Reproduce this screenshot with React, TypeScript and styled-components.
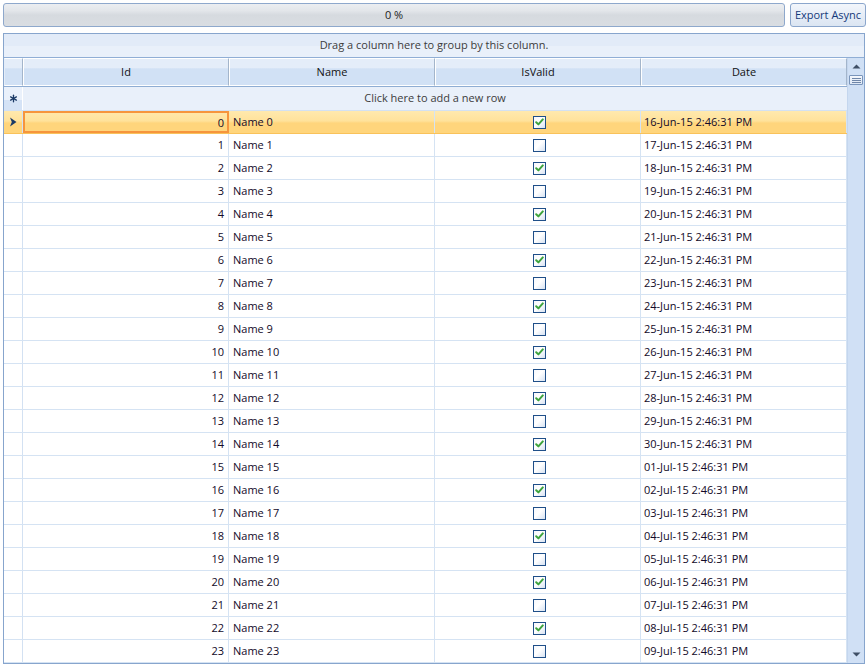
import React from 'react';
import styled, { createGlobalStyle, css } from 'styled-components';

const GlobalStyle = createGlobalStyle`
  html, body {
    margin: 0;
    padding: 0;
    background: #ffffff;
  }
  body {
    font-family: 'Open Sans', 'Noto Sans', sans-serif;
    font-size: 11px;
    color: #000000;
  }
`;

const MONTHS = ['Jan', 'Feb', 'Mar', 'Apr', 'May', 'Jun', 'Jul', 'Aug', 'Sep', 'Oct', 'Nov', 'Dec'];

interface RowData {
  id: number;
  name: string;
  isValid: boolean;
  date: string;
}

const formatDate = (d: Date) => {
  const day = String(d.getDate()).padStart(2, '0');
  const year = String(d.getFullYear()).slice(2);
  return `${day}-${MONTHS[d.getMonth()]}-${year} 2:46:31 PM`;
};

const rows: RowData[] = Array.from({ length: 24 }, (_, i) => {
  const d = new Date(2015, 5, 16 + i);
  return { id: i, name: `Name ${i}`, isValid: i % 2 === 0, date: formatDate(d) };
});

const COLUMNS = '19px 206px 206px 206px 206px';

const App: React.FC = () => {
  return (
    <>
      <GlobalStyle />
      <Page>
        <TopBar>
          <ProgressBar>0 %</ProgressBar>
          <ExportButton>Export Async</ExportButton>
        </TopBar>

        <Grid>
          <GroupPanel>Drag a column here to group by this column.</GroupPanel>
          <GridBody>
            <TableArea>
              <HeaderRow>
                <HeaderCell $indicator />
                <HeaderCell>Id</HeaderCell>
                <HeaderCell>Name</HeaderCell>
                <HeaderCell>IsValid</HeaderCell>
                <HeaderCell>Date</HeaderCell>
              </HeaderRow>

              <NewRow>
                <NewRowIndicator>
                  <svg width="9" height="9" viewBox="0 0 9 9">
                    <g stroke="#1b3a66" strokeWidth="1.3" strokeLinecap="round">
                      <line x1="4.5" y1="1.2" x2="4.5" y2="7.8" />
                      <line x1="1.6" y1="2.9" x2="7.4" y2="6.1" />
                      <line x1="1.6" y1="6.1" x2="7.4" y2="2.9" />
                    </g>
                  </svg>
                </NewRowIndicator>
                <NewRowText>Click here to add a new row</NewRowText>
              </NewRow>

              {rows.map((row) => {
                const selected = row.id === 0;
                return (
                  <DataRow key={row.id} $selected={selected}>
                    <IndicatorCell $selected={selected}>
                      {selected && (
                        <svg width="8" height="10" viewBox="0 0 8 10">
                          <path d="M1 0.5 L7.5 5 L1 9.5 L2.8 5 Z" fill="#1b3a66" />
                        </svg>
                      )}
                    </IndicatorCell>
                    <Cell $align="right" $current={selected}>
                      {row.id}
                    </Cell>
                    <Cell>{row.name}</Cell>
                    <Cell $align="center" $plain>
                      <CheckBox>
                        {row.isValid && (
                          <svg width="9" height="8" viewBox="0 0 9 8">
                            <path
                              d="M1.2 4.2 L3.4 6.4 L7.8 1.4"
                              fill="none"
                              stroke="#3da33d"
                              strokeWidth="2"
                              strokeLinecap="round"
                              strokeLinejoin="round"
                            />
                          </svg>
                        )}
                      </CheckBox>
                    </Cell>
                    <Cell $pad={3}>{row.date}</Cell>
                  </DataRow>
                );
              })}
            </TableArea>

            <ScrollBar>
              <ScrollArrow>
                <svg width="9" height="5" viewBox="0 0 9 5">
                  <path d="M0.5 4.5 L4.5 0.5 L8.5 4.5 Z" fill="#3f4f66" />
                </svg>
              </ScrollArrow>
              <Thumb>
                <ThumbLine />
                <ThumbLine />
                <ThumbLine />
              </Thumb>
              <ScrollTrack />
              <ScrollArrow>
                <svg width="9" height="5" viewBox="0 0 9 5">
                  <path d="M0.5 0.5 L8.5 0.5 L4.5 4.5 Z" fill="#3f4f66" />
                </svg>
              </ScrollArrow>
            </ScrollBar>
          </GridBody>
        </Grid>
      </Page>
    </>
  );
};

export default App;

// Styled Components
const Page = styled.div`
  width: 868px;
  height: 667px;
  padding: 3px 2px 0 3px;
  box-sizing: border-box;
  overflow: hidden;
`;

const TopBar = styled.div`
  display: flex;
  gap: 5px;
  height: 24px;
`;

const ProgressBar = styled.div`
  flex: 1;
  box-sizing: border-box;
  border: 1px solid #8ea8cc;
  border-radius: 3px;
  background: linear-gradient(to bottom, #eceef1 0%, #e3e6ea 30%, #d6dadf 50%, #d9dde2 100%);
  display: flex;
  align-items: center;
  justify-content: center;
  padding-bottom: 2px;
  color: #222;
  font-size: 11px;
`;

const ExportButton = styled.button`
  width: 76px;
  box-sizing: border-box;
  border: 1px solid #8ba6cc;
  border-radius: 3px;
  background: linear-gradient(to bottom, #f3f6fb 0%, #e6edf7 50%, #dbe5f2 100%);
  color: #15397a;
  font-family: 'Open Sans', 'Noto Sans', sans-serif;
  font-size: 11px;
  padding: 0 0 2px 0;
  cursor: pointer;
`;

const Grid = styled.div`
  margin-top: 6px;
  width: 862px;
  height: 631px;
  box-sizing: border-box;
  border: 1px solid #87a5cd;
  display: flex;
  flex-direction: column;
  overflow: hidden;
`;

const GroupPanel = styled.div`
  height: 24px;
  flex-shrink: 0;
  box-sizing: border-box;
  border-bottom: 1px solid #90aed5;
  background: linear-gradient(to bottom, #e2ebf8 0%, #e2ebf8 50%, #e9f0fa 51%, #e9f0fa 100%);
  display: flex;
  align-items: center;
  justify-content: center;
  padding-bottom: 2px;
  color: #3c3c3c;
`;

const GridBody = styled.div`
  flex: 1;
  display: flex;
  min-height: 0;
`;

const TableArea = styled.div`
  width: 843px;
  display: flex;
  flex-direction: column;
  overflow: hidden;
`;

const HeaderRow = styled.div`
  display: grid;
  grid-template-columns: ${COLUMNS};
  height: 29px;
  flex-shrink: 0;
  box-sizing: border-box;
  border-bottom: 1px solid #8fadd3;
`;

const HeaderCell = styled.div<{ $indicator?: boolean }>`
  box-sizing: border-box;
  border: 1px solid #ffffff;
  border-right-color: #a3b5cb;
  border-left-color: ${(p) => (p.$indicator ? '#e4edf8' : '#ffffff')};
  background: linear-gradient(to bottom, #e4edf9 0%, #e4edf9 33%, #d1e1f5 38%, #d1e1f5 100%);
  display: flex;
  align-items: center;
  justify-content: center;
  padding-bottom: 2px;
  color: #111;
`;

const NewRow = styled.div`
  display: grid;
  grid-template-columns: 19px 1fr;
  height: 24px;
  flex-shrink: 0;
  box-sizing: border-box;
  border-bottom: 1px solid #d3e1f2;
  background: #e9f0fa;
`;

const NewRowIndicator = styled.div`
  box-sizing: border-box;
  border-right: 1px solid #ffffff;
  background: linear-gradient(to bottom, #eaf1fb 0%, #eaf1fb 55%, #d5e3f6 56%, #d5e3f6 100%);
  display: flex;
  align-items: center;
  justify-content: center;
`;

const NewRowText = styled.div`
  display: flex;
  align-items: center;
  justify-content: center;
  padding-bottom: 2px;
  color: #3c3c3c;
`;

const DataRow = styled.div<{ $selected?: boolean }>`
  display: grid;
  grid-template-columns: ${COLUMNS};
  height: 23px;
  flex-shrink: 0;
  box-sizing: border-box;
  border-bottom: 1px solid #d5e3f3;
  ${(p) =>
    p.$selected &&
    css`
      background: linear-gradient(to bottom, #ffe9ae 0%, #ffe29b 45%, #ffd57c 55%, #ffd57c 100%);
      border-bottom-color: #f9c25a;
    `}
`;

const IndicatorCell = styled.div<{ $selected?: boolean }>`
  box-sizing: border-box;
  border-right: 1px solid #d3e1f2;
  display: flex;
  align-items: center;
  justify-content: center;
  background: ${(p) => (p.$selected ? 'transparent' : '#ffffff')};
`;

const Cell = styled.div<{
  $align?: 'left' | 'right' | 'center';
  $current?: boolean;
  $pad?: number;
  $plain?: boolean;
}>`
  box-sizing: border-box;
  border-right: 1px solid #d5e3f3;
  display: flex;
  align-items: center;
  justify-content: ${(p) =>
    p.$align === 'right' ? 'flex-end' : p.$align === 'center' ? 'center' : 'flex-start'};
  padding: 0 ${(p) => (p.$align === 'right' ? 4 : 0)}px ${(p) => (p.$plain ? 0 : 2)}px
    ${(p) => p.$pad ?? 4}px;
  white-space: nowrap;
  overflow: hidden;
  color: #120a28;
  ${(p) =>
    p.$current &&
    css`
      border: 2px solid #f6953d;
      padding: 0 3px 0 0;
    `}
`;

const CheckBox = styled.div`
  width: 13px;
  height: 13px;
  box-sizing: border-box;
  border: 1px solid #1f4f89;
  background: linear-gradient(135deg, #f6f8fc 0%, #ffffff 45%, #d7e2f2 100%);
  display: flex;
  align-items: center;
  justify-content: center;
`;

const ScrollBar = styled.div`
  width: 17px;
  display: flex;
  flex-direction: column;
  background: #d0e0f5;
  border-left: 1px solid #c4d6ee;
  box-sizing: border-box;
`;

const ScrollArrow = styled.div`
  height: 17px;
  display: flex;
  align-items: center;
  justify-content: center;
  flex-shrink: 0;
`;

const Thumb = styled.div`
  height: 10px;
  margin: 0 1px;
  box-sizing: border-box;
  border: 1px solid #7a95bb;
  border-radius: 1px;
  background: linear-gradient(to bottom, #f4f7fc 0%, #dde7f5 100%);
  display: flex;
  flex-direction: column;
  justify-content: center;
  align-items: center;
  gap: 1px;
`;

const ThumbLine = styled.div`
  width: 9px;
  height: 1px;
  background: #6f86a8;
`;

const ScrollTrack = styled.div`
  flex: 1;
`;
